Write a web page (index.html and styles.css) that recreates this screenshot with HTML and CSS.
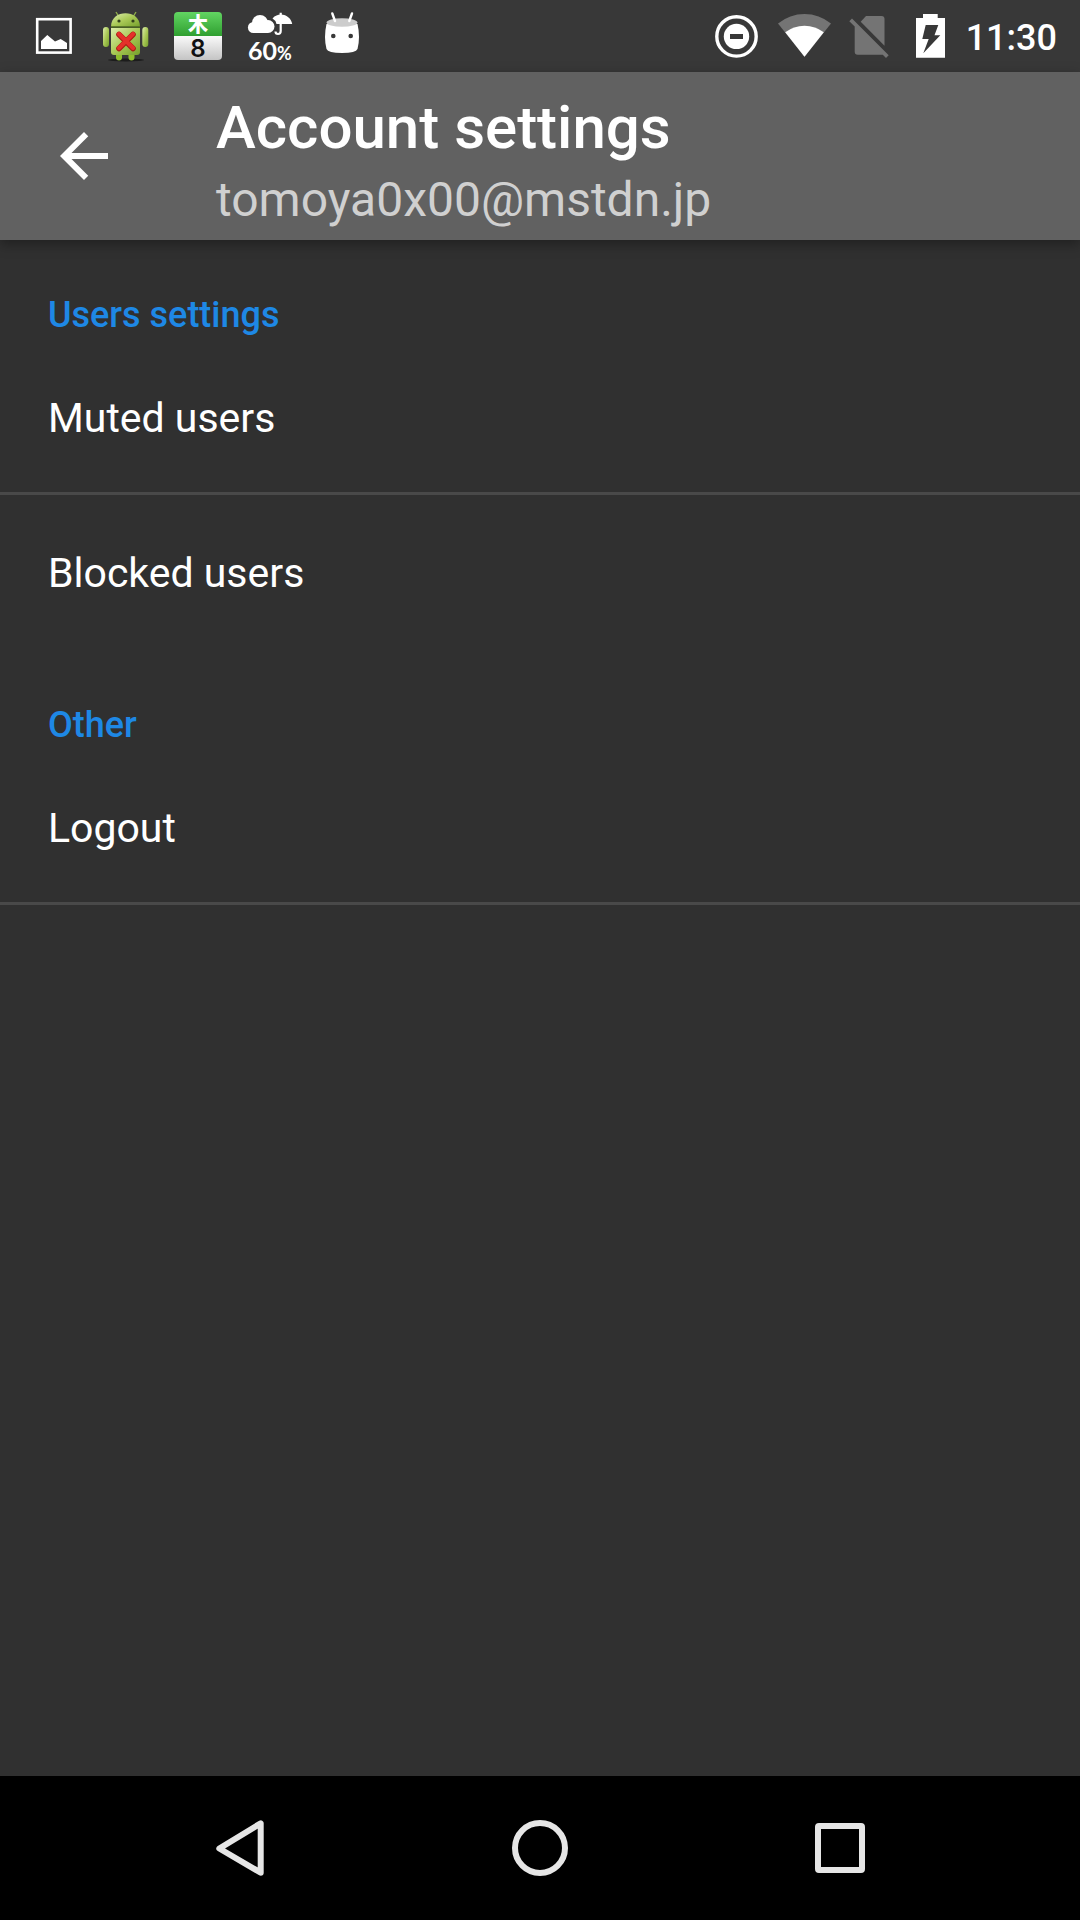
FILE: index.html
```html
<!DOCTYPE html>
<html lang="en">
<head>
<meta charset="utf-8">
<meta name="viewport" content="width=device-width, initial-scale=1">
<title>Account settings</title>
<link rel="stylesheet" href="styles.css">
</head>
<body>
<div class="status-bar">
  <div class="notifications">
    <svg class="slot" viewBox="0 0 72 72" aria-hidden="true">
      <rect x="19.2" y="19.2" width="33.4" height="33.4" fill="none" stroke="#fff" stroke-width="2.6"/>
      <path d="M23 41l6.3-6 7.700 6.500 5.700-2.500 6.300 4v6H23z" fill="#fff"/>
    </svg>
    <svg class="slot" viewBox="0 0 72 72" aria-hidden="true">
      <defs>
        <linearGradient id="robot" x1="0" x2="1" y1="0" y2="1">
          <stop offset="0" stop-color="#dcedab"/><stop offset=".5" stop-color="#a9c956"/><stop offset="1" stop-color="#76a02c"/>
        </linearGradient>
      </defs>
      <ellipse cx="36" cy="60" rx="18" ry="1.5" fill="#1c1c1c"/>
      <path d="M29 17l-3-5M43 17l3-5" stroke="#8fae4a" stroke-width="1.4"/>
      <rect x="26" y="50" width="6" height="10.5" rx="3" fill="#8fbf2c"/>
      <rect x="38.5" y="50" width="6" height="10.5" rx="3" fill="#8fbf2c"/>
      <rect x="13" y="27" width="6" height="20" rx="3" fill="url(#robot)"/>
      <rect x="52.3" y="27" width="6" height="20" rx="3" fill="url(#robot)"/>
      <path d="M21 26.5C21 8.800 50 8.800 50 26.500z" fill="url(#robot)"/>
      <path d="M21 28h29v24q0 3-3 3H24q-3 0-3-3z" fill="url(#robot)"/>
      <path d="M21 27h29" stroke="#587a1d" stroke-width="1.2"/>
      <circle cx="29" cy="21" r="1.6" fill="#34421b"/><circle cx="43" cy="21" r="1.6" fill="#34421b"/>
      <path d="M29 34.500L43 48.500M43 34.500L29 48.500" stroke="#a91a12" stroke-width="5.6" stroke-linecap="round"/>
      <path d="M29 34L43 48M43 34L29 48" stroke="#e5302a" stroke-width="4.2" stroke-linecap="round"/>
    </svg>
    <svg class="slot" viewBox="0 0 72 72" role="img" aria-label="Calendar">
      <defs>
        <linearGradient id="leaf" x2="0" y2="1"><stop stop-color="#62d562"/><stop offset="1" stop-color="#2f9f30"/></linearGradient>
        <linearGradient id="paper" x2="0" y2="1"><stop stop-color="#fafafa"/><stop offset="1" stop-color="#c4c4c4"/></linearGradient>
      </defs>
      <path d="M12 36V16q0-4 4-4h40q4 0 4 4v20z" fill="url(#leaf)"/>
      <path d="M12 36h48v20q0 4-4 4H16q-4 0-4-4z" fill="url(#paper)"/>
      <text class="calendar-day" x="36" y="32">木</text>
      <text class="calendar-date" x="36" y="57">8</text>
    </svg>
    <svg class="slot" viewBox="0 0 72 72" role="img" aria-label="Rain 60%">
      <g fill="#fff">
        <circle cx="19.400" cy="27.500" r="5.500"/>
        <circle cx="26" cy="23" r="8"/>
        <circle cx="34" cy="26.500" r="6.500"/>
        <rect x="19" y="25" width="15" height="8"/>
        <path d="M38.500 18.500C41 15.500 44 14.500 46.700 14.500 53 14.500 57.500 19 58.200 24H42.500q-1-4-4-5.500z"/>
      </g>
      <path d="M46.700 12.700V31q0 3-2.700 3-2.500 0-2.500-2.500" fill="none" stroke="#fff" stroke-width="2.2"/>
      <text class="rain-value" x="14" y="60">60<tspan class="rain-unit">%</tspan></text>
    </svg>
    <svg class="slot" viewBox="0 0 72 72" aria-hidden="true">
      <path d="M20.500 24Q17.500 37 20.500 49 22 53 36 53 50 53 51.500 49 54.500 37 51.500 24z" fill="#fff"/>
      <ellipse cx="36" cy="22.500" rx="15.500" ry="4.300" fill="#ccc"/>
      <path d="M26.300 13.500L29 21M46 13.500L43.300 21" stroke="#fff" stroke-width="2.4" stroke-linecap="round"/>
      <circle cx="27.300" cy="36" r="2.300" fill="#383838"/><circle cx="44.700" cy="36" r="2.300" fill="#383838"/>
    </svg>
  </div>
  <div class="system">
    <svg class="system-icon" viewBox="0 0 48 72" aria-hidden="true">
      <circle cx="22.500" cy="36.400" r="19.700" fill="none" stroke="#fff" stroke-width="3.4"/>
      <circle cx="22.500" cy="36.400" r="12.700" fill="#fff"/>
      <rect x="16" y="34" width="13" height="5" fill="#383838"/>
    </svg>
    <svg class="system-icon wifi" viewBox="0 0 60 72" aria-hidden="true">
      <path d="M30.500 56.700L4 23.400A42.400 42.400 0 0 1 57 23.400z" fill="#747474"/>
      <path d="M30.500 56.700L11.200 32.300A31.700 31.700 0 0 1 49.800 32.300z" fill="#fff"/>
    </svg>
    <svg class="system-icon" viewBox="0 0 48 72" aria-hidden="true">
      <path d="M14.700 21.700L20 16h15.500q3 0 3 3v26.700z" fill="#747474"/>
      <path d="M3.300 21.200L6 18.500 42.700 55.200 40 57.900 36.800 54.700H11.700q-3 0-3-3V26.600z" fill="#747474"/>
    </svg>
    <svg class="system-icon" viewBox="0 0 48 72" aria-hidden="true">
      <path d="M10 18h7v-4h14.700v4H39v39.700H10z" fill="#fff"/>
      <path d="M19.700 25h12.600L28.500 35.300h5.800L17.300 53.300 22.700 39h-6.400z" fill="#383838"/>
    </svg>
    <time class="clock">11:30</time>
  </div>
</div>

<header class="toolbar">
  <button class="back" type="button" aria-label="Navigate up">
    <svg viewBox="0 0 24 24" aria-hidden="true"><path d="M20 11H7.830l5.590-5.590L12 4l-8 8 8 8 1.410-1.410L7.830 13H20v-2z" fill="#fff"/></svg>
  </button>
  <div class="titles">
    <h1 class="title">Account settings</h1>
    <p class="subtitle">tomoya0x00@mstdn.jp</p>
  </div>
</header>

<main class="preferences">
  <section>
    <h2 class="category">Users settings</h2>
    <button class="preference" type="button">Muted users</button>
    <button class="preference plain" type="button">Blocked users</button>
  </section>
  <section>
    <h2 class="category">Other</h2>
    <button class="preference" type="button">Logout</button>
  </section>
</main>

<nav class="nav-bar" aria-label="System navigation">
  <button class="nav-button" type="button" aria-label="Back">
    <svg viewBox="0 0 72 72" aria-hidden="true"><path d="M56.700 11.300V60.700L15.300 36.500z" class="nav-shape"/></svg>
  </button>
  <button class="nav-button" type="button" aria-label="Home">
    <svg viewBox="0 0 72 72" aria-hidden="true"><circle cx="36" cy="36" r="25" class="nav-shape"/></svg>
  </button>
  <button class="nav-button" type="button" aria-label="Recent apps">
    <svg viewBox="0 0 72 72" aria-hidden="true"><rect x="14" y="14" width="44" height="44" rx="1" class="nav-shape"/></svg>
  </button>
</nav>
</body>
</html>
```
FILE: styles.css
```css
* {
  box-sizing: border-box;
}

body {
  display: flex;
  flex-direction: column;
  min-height: 100vh;
  margin: 0;
  background: #303030;
  color: #fff;
  font-family: Roboto, sans-serif;
}

button {
  margin: 0;
  padding: 0;
  border: 0;
  background: none;
  color: inherit;
  font: inherit;
}

svg {
  display: block;
}

.status-bar {
  display: flex;
  justify-content: space-between;
  padding: 0 23px 0 18px;
  background: #383838;
}

.notifications,
.system {
  display: flex;
  align-items: center;
}

.system {
  gap: 12px;
}

.slot {
  width: 72px;
  height: 72px;
}

.system-icon {
  width: 48px;
  height: 72px;
}

.wifi {
  width: 60px;
}

.clock {
  padding-top: 4px;
  font-size: 36px;
  font-weight: 500;
  line-height: 48px;
}

.calendar-day {
  fill: #fff;
  font: 900 20px "Noto Sans CJK JP", sans-serif;
  text-anchor: middle;
}

.calendar-date {
  fill: #111;
  font: 600 24px Inter, sans-serif;
  text-anchor: middle;
}

.rain-value {
  fill: #fff;
  font: 700 25px Lato, sans-serif;
}

.rain-unit {
  font-size: 18px;
}

.toolbar {
  display: flex;
  background: #616161;
  box-shadow: 0 4px 12px rgba(0, 0, 0, 0.35);
}

.back {
  display: grid;
  place-items: center;
  width: 168px;
  height: 168px;
}

.back svg {
  width: 72px;
  height: 72px;
}

.titles {
  padding: 20px 48px 12px;
}

.title,
.subtitle {
  margin: 0;
}

.title {
  font-size: 60px;
  font-weight: 500;
  line-height: 72px;
}

.subtitle {
  margin-top: 8px;
  color: #d0d0d0;
  font-size: 48px;
  line-height: 56px;
}

.preferences {
  flex: 1;
}

.category {
  margin: 0;
  padding: 50px 48px 0;
  color: #1e88e5;
  font-size: 36px;
  font-weight: 500;
  line-height: 50px;
}

.preference {
  display: block;
  width: 100%;
  padding: 52px 48px 48px;
  border-bottom: 3px solid #494949;
  font-size: 41px;
  line-height: 52px;
  text-align: left;
}

.preference.plain {
  border-color: transparent;
}

.nav-bar {
  display: grid;
  grid-template-columns: repeat(3, 1fr);
  padding: 0 90px;
  background: #000;
}

.nav-button {
  display: grid;
  place-items: center;
  height: 144px;
}

.nav-button svg {
  width: 72px;
  height: 72px;
}

.nav-shape {
  fill: none;
  stroke: #e6e6e6;
  stroke-width: 6px;
  stroke-linejoin: round;
}
```
